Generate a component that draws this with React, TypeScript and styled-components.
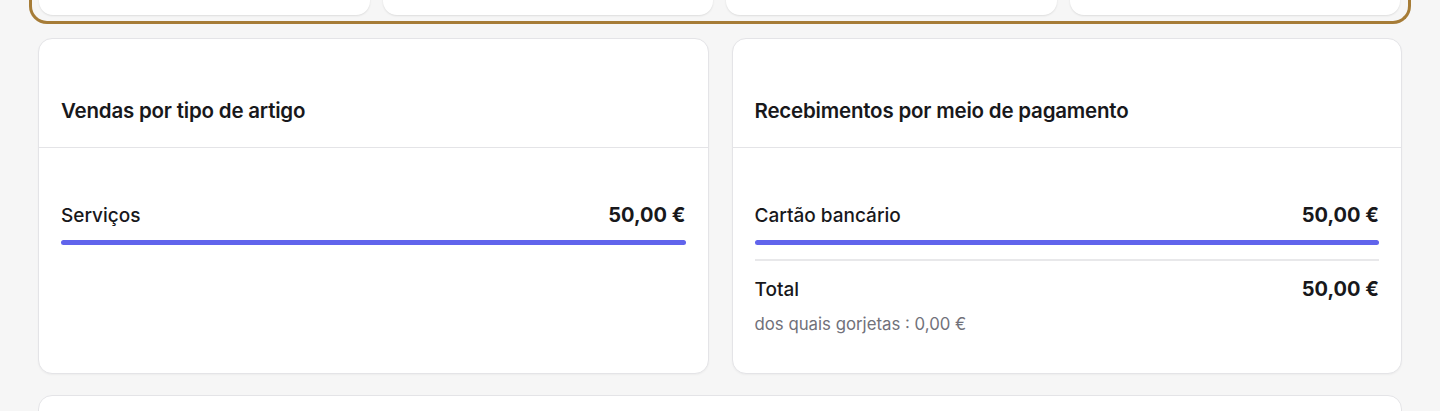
import React from 'react';
import styled, { createGlobalStyle } from 'styled-components';

const GlobalStyle = createGlobalStyle`
  html, body {
    margin: 0;
    padding: 0;
    background: #f6f6f6;
    font-family: Inter, "Noto Sans", sans-serif;
    color: #18181b;
  }
`;

const Page = styled.div`
  padding: 0 38px;
  height: 411px;
  overflow: hidden;
  display: flex;
  flex-direction: column;
`;

const Highlight = styled.div`
  margin: -16px -9px 0;
  border: 3px solid #a67c37;
  border-top: none;
  border-radius: 0 0 18px 18px;
  padding: 0 8px 6px 7px;
  display: grid;
  grid-template-columns: repeat(4, 1fr);
  gap: 13px;
`;

const KpiCard = styled.div`
  height: 31px;
  background: #fff;
  border-radius: 0 0 14px 14px;
  box-shadow: 0 1px 2px rgba(0, 0, 0, 0.1);
`;

const Row = styled.div`
  margin-top: 14px;
  display: grid;
  grid-template-columns: 1fr 1fr;
  gap: 23px;
`;

const Card = styled.section`
  background: #fff;
  border: 1px solid #e4e4e7;
  border-radius: 14px;
  box-shadow: 0 1px 2px rgba(0, 0, 0, 0.04);
  height: 336px;
  box-sizing: border-box;
  display: flex;
  flex-direction: column;
`;

const CardHeader = styled.div`
  padding: 59px 22px 23px;
  border-bottom: 1px solid #e4e4e7;
`;

const Title = styled.h2`
  margin: 0;
  font-size: 20.5px;
  line-height: 26px;
  font-weight: 600;
  letter-spacing: -0.2px;
`;

const CardBody = styled.div`
  padding: 54px 22px 0 22px;
`;

const LineRow = styled.div`
  display: flex;
  justify-content: space-between;
  align-items: center;
  height: 26px;
`;

const Label = styled.span`
  font-size: 19px;
  font-weight: 500;
`;

const Amount = styled.span`
  font-size: 20px;
  font-weight: 700;
`;

const Bar = styled.div`
  margin-top: 12px;
  height: 5px;
  border-radius: 3px;
  background: #6164ec;
`;

const Divider = styled.div`
  margin-top: 14px;
  height: 2px;
  background: #e8e8ea;
`;

const TotalRow = styled(LineRow)`
  margin-top: 15px;
`;

const Note = styled.div`
  margin-top: 12px;
  font-size: 16.8px;
  color: #71717a;
`;

const BottomCard = styled.div`
  margin-top: 21px;
  height: 80px;
  flex-shrink: 0;
  background: #fff;
  border: 1px solid #e4e4e7;
  border-radius: 14px;
`;

export default function App() {
  const rows = [{ label: 'Serviços', amount: '50,00 €', pct: 100 }];
  const payments = [{ label: 'Cartão bancário', amount: '50,00 €', pct: 100 }];

  return (
    <>
      <GlobalStyle />
      <Page>
        <Highlight>
          <KpiCard />
          <KpiCard />
          <KpiCard />
          <KpiCard />
        </Highlight>
        <Row>
          <Card>
            <CardHeader>
              <Title>Vendas por tipo de artigo</Title>
            </CardHeader>
            <CardBody>
              {rows.map((r) => (
                <div key={r.label}>
                  <LineRow>
                    <Label>{r.label}</Label>
                    <Amount>{r.amount}</Amount>
                  </LineRow>
                  <Bar style={{ width: `${r.pct}%` }} />
                </div>
              ))}
            </CardBody>
          </Card>
          <Card>
            <CardHeader>
              <Title>Recebimentos por meio de pagamento</Title>
            </CardHeader>
            <CardBody>
              {payments.map((r) => (
                <div key={r.label}>
                  <LineRow>
                    <Label>{r.label}</Label>
                    <Amount>{r.amount}</Amount>
                  </LineRow>
                  <Bar style={{ width: `${r.pct}%` }} />
                </div>
              ))}
              <Divider />
              <TotalRow>
                <Label>Total</Label>
                <Amount>50,00 €</Amount>
              </TotalRow>
              <Note>dos quais gorjetas : 0,00 €</Note>
            </CardBody>
          </Card>
        </Row>
        <BottomCard />
      </Page>
    </>
  );
}
